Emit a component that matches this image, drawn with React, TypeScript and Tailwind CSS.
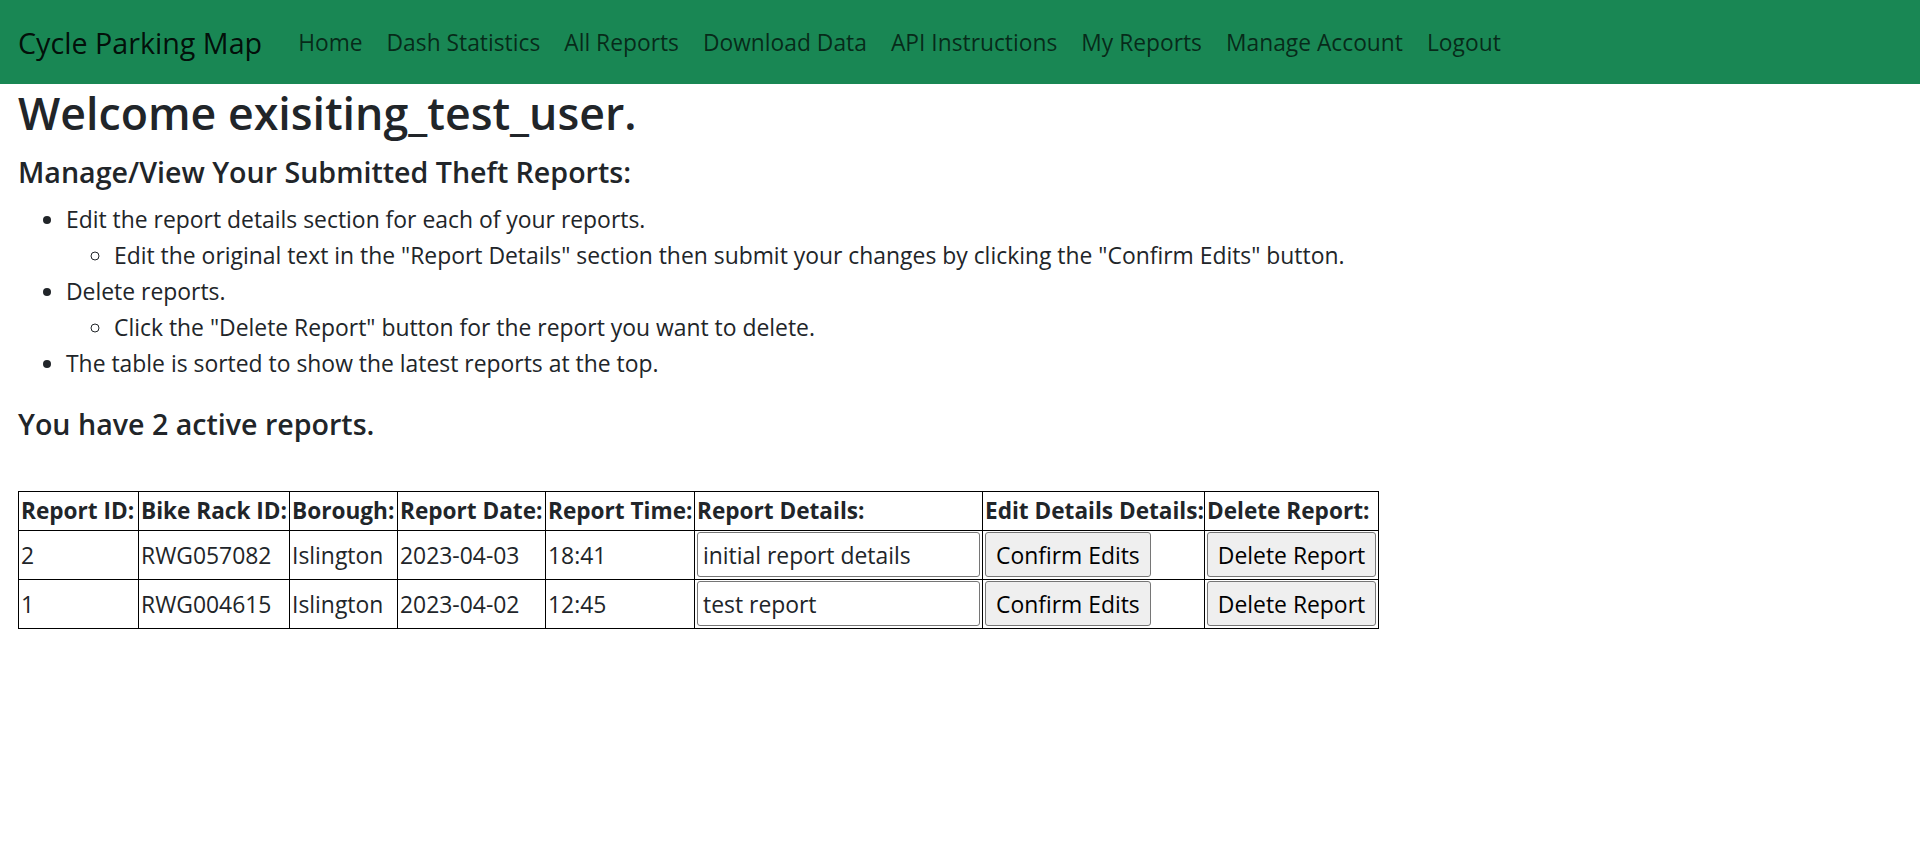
import React from "react";

const navLinks = [
  "Home",
  "Dash Statistics",
  "All Reports",
  "Download Data",
  "API Instructions",
  "My Reports",
  "Manage Account",
  "Logout",
];

const reports = [
  { id: 2, rack: "RWG057082", borough: "Islington", date: "2023-04-03", time: "18:41", details: "initial report details" },
  { id: 1, rack: "RWG004615", borough: "Islington", date: "2023-04-02", time: "12:45", details: "test report" },
];

const columns = [
  { label: "Report ID:", width: "w-[120px]" },
  { label: "Bike Rack ID:", width: "w-[151px]" },
  { label: "Borough:", width: "w-[108px]" },
  { label: "Report Date:", width: "w-[148px]" },
  { label: "Report Time:", width: "w-[149px]" },
  { label: "Report Details:", width: "w-[288px]" },
  { label: "Edit Details Details:", width: "w-[222px]" },
  { label: "Delete Report:", width: "w-[174px]" },
];

function Navbar() {
  return (
    <nav className="h-[84px] bg-[#198754] px-[18px] pt-[2px] flex items-center">
      <a href="#" className="text-[28.7px] leading-[45px] text-black/90 mr-[24px] pb-[2px]">
        Cycle Parking Map
      </a>
      <ul className="flex items-center">
        {navLinks.map((link) => (
          <li key={link}>
            <a href="#" className="block px-[12px] text-[22.8px] leading-[36px] text-black/70">
              {link}
            </a>
          </li>
        ))}
      </ul>
    </nav>
  );
}

function ReportsTable() {
  return (
    <table className="table-fixed border-collapse border border-black w-[1360px]">
      <thead>
        <tr>
          {columns.map((col) => (
            <th key={col.label} className={`${col.width} border border-black px-[2px] py-[1px] text-left text-[22.6px] font-bold leading-[36px] whitespace-nowrap`}>
              {col.label}
            </th>
          ))}
        </tr>
      </thead>
      <tbody>
        {reports.map((r) => (
          <tr key={r.id} className="h-[49px]">
            <td className="border border-black px-[2px] pt-[3px]">{r.id}</td>
            <td className="border border-black px-[2px] pt-[3px]">{r.rack}</td>
            <td className="border border-black px-[2px] pt-[3px]">{r.borough}</td>
            <td className="border border-black px-[2px] pt-[3px]">{r.date}</td>
            <td className="border border-black px-[2px] pt-[3px]">{r.time}</td>
            <td className="border border-black px-[2px] py-[1px]">
              <input
                type="text"
                defaultValue={r.details}
                className="w-full h-[45px] border border-[#767676] rounded-[3px] px-[5px] pt-[2px] text-[#212529] outline-none"
              />
            </td>
            <td className="border border-black px-[2px] py-[1px]">
              <button className="h-[45px] px-[10px] pt-[2px] bg-[#efefef] border border-[#767676] rounded-[3px] text-black">
                Confirm Edits
              </button>
            </td>
            <td className="border border-black px-[2px] py-[1px]">
              <button className="w-full h-[45px] px-[9px] pt-[2px] bg-[#efefef] border border-[#767676] rounded-[3px] text-black">
                Delete Report
              </button>
            </td>
          </tr>
        ))}
      </tbody>
    </table>
  );
}

export default function App() {
  return (
    <div className="min-h-[858px] bg-white text-[#212529] text-[22.9px] leading-[36px] font-['Open_Sans',sans-serif]">
      <Navbar />
      <main className="px-[18px]">
        <h2 className="text-[44.7px] leading-[57.6px] font-semibold mb-[12px]">Welcome exisiting_test_user.</h2>
        <h5 className="text-[28.6px] leading-[36px] font-semibold mb-[12px]">Manage/View Your Submitted Theft Reports:</h5>
        <ul className="list-disc pl-[48px] mb-[24px]">
          <li>
            Edit the report details section for each of your reports.
            <ul className="list-[circle] pl-[48px]">
              <li>
                Edit the original text in the "Report Details" section then submit your changes by clicking the "Confirm
                Edits" button.
              </li>
            </ul>
          </li>
          <li>
            Delete reports.
            <ul className="list-[circle] pl-[48px]">
              <li>Click the "Delete Report" button for the report you want to delete.</li>
            </ul>
          </li>
          <li>The table is sorted to show the latest reports at the top.</li>
        </ul>
        <h5 className="text-[28.6px] leading-[36px] font-semibold mb-[12px]">You have 2 active reports.</h5>
        <div className="h-[37px]" />
        <ReportsTable />
      </main>
    </div>
  );
}
